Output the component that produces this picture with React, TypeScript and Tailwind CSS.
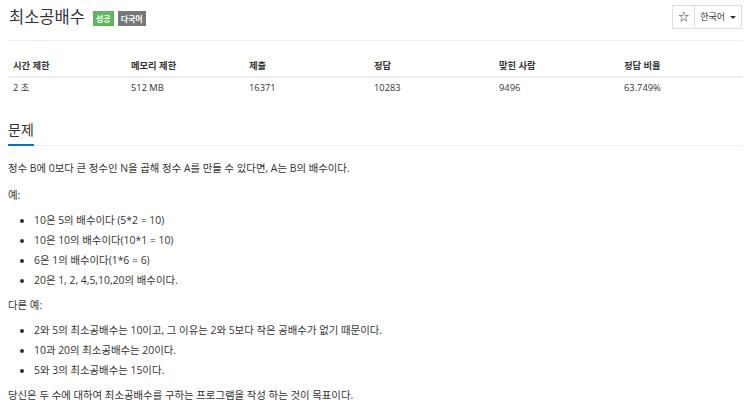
import React from 'react';

const stats = [
  { label: '시간 제한', value: '2 초', w: 'w-[118px]' },
  { label: '메모리 제한', value: '512 MB', w: 'w-[118px]' },
  { label: '제출', value: '16371', w: 'w-[125px]' },
  { label: '정답', value: '10283', w: 'w-[125px]' },
  { label: '맞힌 사람', value: '9496', w: 'w-[125px]' },
  { label: '정답 비율', value: '63.749%', w: '' },
];

const App: React.FC = () => {
  return (
    <div className="min-h-[412px] bg-white px-2 text-[#333] [font-family:'Open_Sans','Noto_Sans_CJK_KR',sans-serif]">
      <header className="flex items-center justify-between border-b border-[#eee] pt-[5px] pb-[11px]">
        <div className="flex items-center">
          <h1 className="ml-px text-[16.5px] leading-[24px] font-normal">최소공배수</h1>
          <span className="ml-[8px] mt-[3px] bg-[#5cb85c] px-[3px] text-[8px] font-bold leading-[15px] text-white">성공</span>
          <span className="ml-[4px] mt-[3px] bg-[#777] px-[3px] text-[8px] font-bold leading-[15px] text-white">다국어</span>
        </div>
        <div className="flex h-[24px] text-[9px]">
          <button className="flex w-[23px] items-center justify-center border border-[#ddd] text-[11px]">☆</button>
          <button className="-ml-px flex items-center gap-[5px] border border-[#ddd] px-[5px]">
            한국어
            <span className="h-0 w-0 border-x-[3px] border-t-[3px] border-x-transparent border-t-[#333]" />
          </button>
        </div>
      </header>

      <table className="mt-[17px] w-full border-collapse text-[9.3px] leading-[15px]">
        <thead>
          <tr className="border-b-2 border-[#eee]">
            {stats.map((s) => (
              <th key={s.label} className={`${s.w} px-[5px] pb-[3px] text-left font-bold`}>{s.label}</th>
            ))}
          </tr>
        </thead>
        <tbody>
          <tr>
            {stats.map((s) => (
              <td key={s.label} className="px-[5px] pt-[2px]">{s.value}</td>
            ))}
          </tr>
        </tbody>
      </table>

      <section className="mt-[22px]">
        <div className="border-b border-[#eee]">
          <h2 className="-mb-px inline-block border-b-2 border-[#0076c0] pb-[3px] text-[14px] leading-[22px] font-normal">문제</h2>
        </div>
        <div className="mt-[12px] text-[10.4px] leading-[20px]">
          <p>정수 B에 0보다 큰 정수인 N을 곱해 정수 A를 만들 수 있다면, A는 B의 배수이다.</p>
          <p className="mt-[7px]">예:</p>
          <ul className="mt-[5px] list-disc pl-[26px]">
            <li>10은 5의 배수이다 (5*2 = 10)</li>
            <li>10은 10의 배수이다(10*1 = 10)</li>
            <li>6은 1의 배수이다(1*6 = 6)</li>
            <li>20은 1, 2, 4,5,10,20의 배수이다.</li>
          </ul>
          <p className="mt-[5px]">다른 예:</p>
          <ul className="mt-[5px] list-disc pl-[26px]">
            <li>2와 5의 최소공배수는 10이고, 그 이유는 2와 5보다 작은 공배수가 없기 때문이다.</li>
            <li>10과 20의 최소공배수는 20이다.</li>
            <li>5와 3의 최소공배수는 15이다.</li>
          </ul>
          <p className="mt-[5px]">당신은 두 수에 대하여 최소공배수를 구하는 프로그램을 작성 하는 것이 목표이다.</p>
        </div>
      </section>
    </div>
  );
};

export default App;
